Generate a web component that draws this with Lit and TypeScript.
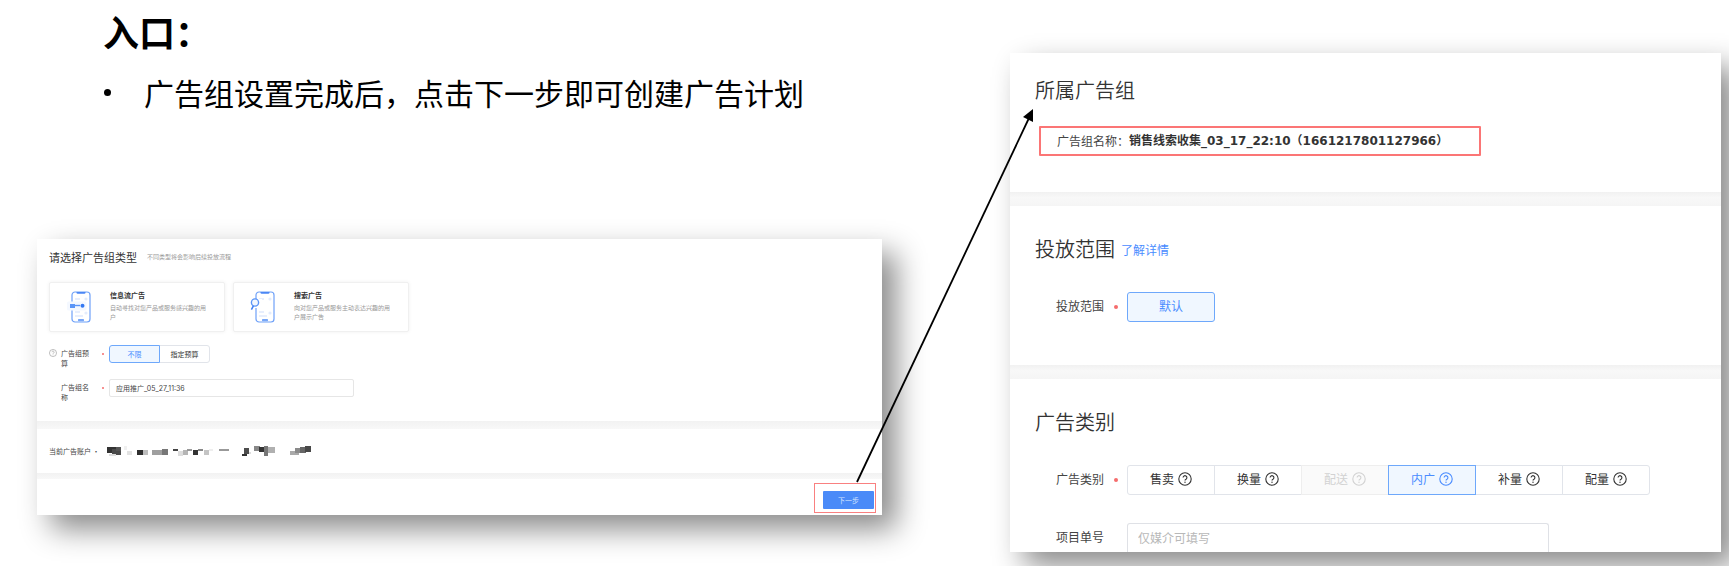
import { LitElement, html, svg, css } from "lit";
import { customElement, property } from "lit/decorators.js";
import { classMap } from "lit/directives/class-map.js";

/** Question mark in a circle, used next to option labels. */
const helpIcon = svg`<svg class="help" viewBox="0 0 14 14" aria-hidden="true">
  <circle cx="7" cy="7" r="6.2" fill="none" stroke="currentColor" stroke-width="1.1" />
  <path d="M5.1 5.6a1.9 1.9 0 1 1 2.9 1.6c-.7.4-1 .7-1 1.4" fill="none" stroke="currentColor" stroke-width="1.1" />
  <circle cx="7" cy="10.2" r=".7" fill="currentColor" />
</svg>`;

const phoneBody = svg`
  <rect x="6" y="1" width="18" height="30" rx="3" fill="#fff" stroke="#6fa1f8" stroke-width="1.2" />
  <path d="M10.500 1h9v.6a1.200 1.200 0 0 1-1.200 1.200h-6.600a1.200 1.200 0 0 1-1.200-1.200z" fill="#4a86f5" />
  <rect x="12" y="28" width="6" height="2.200" rx=".6" fill="#78a7f8" />
  <path d="M9 8h5M9 21h5M9 25h8" stroke="#dfe9fd" stroke-width="1.400" />
  <circle cx="20" cy="8" r="1.600" fill="#e3ecfd" />
  <circle cx="20" cy="22" r="1.600" fill="#e3ecfd" />`;

const feedIcon = svg`<svg class="phone" viewBox="0 0 26 32" aria-hidden="true">
  ${phoneBody}
  <rect x="1" y="10.500" width="19.500" height="9" rx="1.500" fill="#f4f8ff" />
  <rect x="4" y="13" width="5" height="4" fill="#5b95f7" />
  <path d="M9 14.500h5" stroke="#5b95f7" stroke-width="1.400" />
  <circle cx="16.500" cy="14.800" r="2" fill="#3478f2" />
</svg>`;

const searchIcon = svg`<svg class="phone" viewBox="0 0 26 32" aria-hidden="true">
  ${phoneBody}
  <rect x="2" y="8" width="10" height="9" fill="#fff" />
  <circle cx="5" cy="11.500" r="3.600" fill="#f2f7ff" stroke="#5b95f7" stroke-width="1.400" />
  <path d="M3.400 14.800L1.400 18.600" stroke="#3f7ff3" stroke-width="1.500" />
</svg>`;

/** Pixelated account name: x, y, width, height, grey. */
const mosaic: [number, number, number, number, string][] = [
  [0, 1, 9, 6, "#333"], [5, 3, 9, 6, "#4a4a4a"], [9, 1, 5, 4, "#555"], [2, 8, 7, 2, "#ddd"],
  [17, 0, 3, 4, "#f0f0f0"], [20, 5, 5, 4, "#e2e2e2"],
  [30, 4, 6, 5, "#2f2f2f"], [36, 4, 5, 5, "#bdbdbd"],
  [45, 4, 10, 5, "#9f9f9f"], [55, 3, 6, 6, "#777"],
  [66, 3, 5, 2, "#444"], [71, 5, 5, 5, "#ddd"], [76, 4, 5, 5, "#b5b5b5"], [80, 3, 5, 2, "#999"],
  [86, 4, 5, 5, "#333"], [91, 3, 5, 2, "#888"], [97, 4, 5, 5, "#c4c4c4"], [102, 3, 4, 2, "#eee"],
  [112, 3, 10, 2, "#999"],
  [137, 2, 5, 6, "#4d4d4d"], [135, 8, 5, 2, "#333"], [142, 6, 2, 2, "#ddd"],
  [147, 0, 6, 5, "#888"], [152, 1, 5, 5, "#333"], [157, 0, 4, 10, "#777"], [161, 1, 7, 6, "#b0b0b0"],
  [183, 5, 9, 4, "#aaa"], [188, 2, 7, 5, "#8a8a8a"], [193, 1, 6, 6, "#666"], [198, 0, 6, 6, "#484848"],
];

interface Option {
  label: string;
  checked?: boolean;
  disabled?: boolean;
  help?: boolean;
}

/** Row of joined radio options. */
@customElement("option-bar")
export class OptionBar extends LitElement {
  @property({ attribute: false }) options: Option[] = [];
  @property() label = "";
  @property() size = "regular";

  static styles = css`
    :host { display: block; }
    .bar { display: flex; }
    .option {
      position: relative;
      display: flex; align-items: center; justify-content: center; gap: 4px;
      box-sizing: border-box; width: 88px; height: 30px; margin-right: -1px; padding-bottom: 2px;
      border: 1px solid #e1e4ea; background: #fff;
      font-size: 12px; line-height: 16px; color: #333;
    }
    .option:first-child { border-radius: 3px 0 0 3px; }
    .option:last-child { border-radius: 0 3px 3px 0; }
    .option:only-child { border-radius: 3px; }
    .small { width: 51px; height: 18px; padding-bottom: 0; font-size: 7px; line-height: 10px; }
    .disabled { color: #d2d2d2; background: #fafafa; border-color: #eee; }
    .checked { z-index: 1; color: #4a8cff; background: #f0f7ff; border-color: #6ea8fb; }
    input { position: absolute; inset: 0; width: 100%; height: 100%; margin: 0; opacity: 0; }
    .help { width: 14px; height: 14px; }
  `;

  render() {
    return html`<div class="bar" role="radiogroup" aria-label=${this.label}>
      ${this.options.map(
        (o) => html`<label
          class=${classMap({ option: true, small: this.size === "small", checked: !!o.checked, disabled: !!o.disabled })}
          ><input type="radio" name="choice" .checked=${!!o.checked} ?disabled=${!!o.disabled} /><span>${o.label}</span>${o.help ? helpIcon : ""}</label
        >`
      )}
    </div>`;
  }
}

/** Panel in which the ad group is set up. */
@customElement("group-panel")
export class GroupPanel extends LitElement {
  static styles = css`
    :host { display: block; background: #fff; color: #444; font-size: 7px; line-height: 10px; }
    section { padding: 12px; }
    .setup { padding-bottom: 18px; }
    .band { height: 8px; background: linear-gradient(#f2f2f2, #f8f8f8); }
    .band.thin { height: 6px; }
    .head { display: flex; align-items: center; gap: 10px; height: 12px; }
    h2 { margin: 0; font-size: 11px; line-height: 12px; font-weight: 400; color: #333; }
    .hint { font-size: 6px; color: #999; }
    .kinds { display: flex; gap: 8px; margin: 19px 0 13px; }
    .kind {
      display: flex; box-sizing: border-box; width: 176px; height: 50px; padding: 8px 13px 8px 16px; gap: 18px;
      border: 1px solid #f0f0f0; border-radius: 2px; background: #fff; text-align: left;
      box-shadow: 0 0 4px rgba(0, 0, 0, 0.06); font-family: inherit;
    }
    .phone { flex: none; width: 26px; height: 32px; }
    .kind b { display: block; font-size: 7px; line-height: 8px; color: #333; }
    .kind span span { display: block; margin-top: 4px; font-size: 6px; line-height: 9px; color: #999; }
    .row { display: grid; grid-template-columns: 12px 36px 12px 1fr; height: 24px; }
    .row + .row { margin-top: 10px; }
    .help { width: 8px; height: 8px; margin-top: 4px; color: #999; }
    .name { padding-top: 3px; width: 29px; word-break: break-all; }
    .dot { width: 2px; height: 2px; margin: 8px 0 0 5px; border-radius: 50%; background: #f56c6c; }
    .text {
      box-sizing: border-box; width: 245px; height: 18px; padding: 0 6px; border: 1px solid #e6e6e6; border-radius: 2px;
      font: 7px/10px Inter, "Noto Sans CJK SC", sans-serif; color: #444;
    }
    .account { display: flex; align-items: center; gap: 7px; height: 20px; }
    .mosaic { width: 206px; height: 10px; }
    footer { display: flex; justify-content: flex-end; padding: 4px 6px 2px; }
    .mark { display: flex; align-items: flex-end; padding: 7px 1px 3px 8px; border: 1px solid #f98080; }
    .next {
      width: 51px; height: 18px; padding: 0; border: 0; border-radius: 1px;
      background: #4a8af8; color: #d5e4ff; font: inherit;
    }
  `;

  render() {
    return html`
      <section class="setup">
        <div class="head"><h2>请选择广告组类型</h2><span class="hint">不同类型将会影响后续投放流程</span></div>
        <div class="kinds">
          <button class="kind" type="button">${feedIcon}<span><b>信息流广告</b><span>自动寻找对您产品或服务感兴趣的用户</span></span></button>
          <button class="kind" type="button">${searchIcon}<span><b>搜索广告</b><span>向对您产品或服务主动表达兴趣的用户展示广告</span></span></button>
        </div>
        <div class="row">
          ${helpIcon}<span class="name">广告组预算</span><i class="dot"></i>
          <option-bar size="small" label="广告组预算" .options=${[{ label: "不限", checked: true }, { label: "指定预算" }]}></option-bar>
        </div>
        <div class="row">
          <span></span><label class="name" for="group-name">广告组名称</label><i class="dot"></i>
          <input class="text" id="group-name" type="text" .value=${"应用推广_05_27_11:36"} />
        </div>
      </section>
      <div class="band"></div>
      <section class="account">
        <span>当前广告账户 ·</span>
        <svg class="mosaic" viewBox="0 0 206 10" aria-hidden="true">
          ${mosaic.map(([x, y, w, h, c]) => svg`<rect x=${x} y=${y} width=${w} height=${h} fill=${c} />`)}
        </svg>
      </section>
      <div class="band thin"></div>
      <footer><div class="mark"><button class="next" type="button">下一步</button></div></footer>
    `;
  }
}

/** Panel of the ad plan that belongs to the group. */
@customElement("plan-panel")
export class PlanPanel extends LitElement {
  static styles = css`
    :host { display: block; background: #fff; color: #444; font-size: 12px; line-height: 16px; }
    section { padding: 29px 25px 0; }
    section.owner { padding: 23px 25px 36px; }
    section.scope { padding-bottom: 43px; }
    .band { height: 14px; background: linear-gradient(#f1f1f1, #f8f8f8 40%, #f5f5f5); }
    .head { display: flex; align-items: center; gap: 6px; }
    h2 { margin: 0; padding-bottom: 1px; font-size: 20px; line-height: 28px; font-weight: 350; color: #333; }
    a { color: #4a8cff; text-decoration: none; }
    .mark {
      display: flex; align-items: center; box-sizing: border-box; max-width: 442px; height: 30px;
      margin: 21px 0 0 4px; padding-left: 16px; border: 2px solid #fb7575; border-radius: 1px; white-space: nowrap;
    }
    b { font-family: "DejaVu Sans", "Noto Sans CJK SC", sans-serif; color: #333; }
    .row { display: grid; grid-template-columns: 58px 13px 1fr; align-items: center; margin: 28px 0 0 21px; }
    .name { padding-bottom: 2px; }
    .dot { width: 4px; height: 4px; border-radius: 50%; background: #f56c6c; }
    .field {
      box-sizing: border-box; width: 100%; max-width: 422px; height: 29px; padding: 0 10px 2px;
      border: 1px solid #dfe1e6; border-bottom: 0; border-radius: 3px 3px 0 0; font: inherit; color: #333;
    }
    .field::placeholder { color: #b8b8b8; }
  `;

  render() {
    return html`
      <section class="owner">
        <h2>所属广告组</h2>
        <div class="mark"><span>广告组名称：</span><b>销售线索收集_03_17_22:10（1661217801127966）</b></div>
      </section>
      <div class="band"></div>
      <section class="scope">
        <div class="head"><h2>投放范围</h2><a href="#">了解详情</a></div>
        <div class="row">
          <span class="name">投放范围</span><i class="dot"></i>
          <option-bar label="投放范围" .options=${[{ label: "默认", checked: true }]}></option-bar>
        </div>
      </section>
      <div class="band"></div>
      <section>
        <h2>广告类别</h2>
        <div class="row">
          <span class="name">广告类别</span><i class="dot"></i>
          <option-bar
            label="广告类别"
            .options=${[
              { label: "售卖", help: true },
              { label: "换量", help: true },
              { label: "配送", help: true, disabled: true },
              { label: "内广", help: true, checked: true },
              { label: "补量", help: true },
              { label: "配量", help: true },
            ]}
          ></option-bar>
        </div>
        <div class="row">
          <label class="name" for="project">项目单号</label><span></span>
          <input class="field" id="project" type="text" placeholder="仅媒介可填写" />
        </div>
      </section>
    `;
  }
}

@customElement("app-root")
export class AppRoot extends LitElement {
  static styles = css`
    :host { display: block; overflow: hidden; background: #fff; font-family: "Noto Sans CJK SC", sans-serif; }
    .slide {
      position: relative; display: grid; grid-template-columns: minmax(0, 845fr) minmax(0, 711fr);
      column-gap: 128px; padding: 0 8px 14px 37px;
    }
    .intro { padding: 9px 0 125px 66px; color: #000; }
    h1 { margin: 0; font-size: 36px; line-height: 44px; font-weight: 700; }
    ul { margin: 17px 0 0; padding: 0; list-style: none; }
    li { display: flex; font-size: 30px; line-height: 44px; white-space: nowrap; }
    .bullet { align-self: center; width: 7px; height: 7px; margin: 0 33px 0 1px; border-radius: 50%; background: #000; }
    .right { padding-top: 53px; }
    group-panel, plan-panel { box-shadow: 14px 14px 28px rgba(0, 0, 0, 0.46); }
    .arrow { position: absolute; inset: 0; width: 100%; height: 100%; pointer-events: none; }
  `;

  render() {
    return html`
      <main class="slide">
        <div>
          <div class="intro">
            <h1>入口：</h1>
            <ul><li><i class="bullet"></i>广告组设置完成后，点击下一步即可创建广告计划</li></ul>
          </div>
          <group-panel></group-panel>
        </div>
        <div class="right"><plan-panel></plan-panel></div>
        <svg class="arrow" viewBox="0 0 1729 566" preserveAspectRatio="none" aria-hidden="true">
          <path d="M857 482L1029 118" stroke="#000" stroke-width="1.800" />
          <path d="M1033 109L1023 117L1033 122Z" fill="#000" />
        </svg>
      </main>
    `;
  }
}
